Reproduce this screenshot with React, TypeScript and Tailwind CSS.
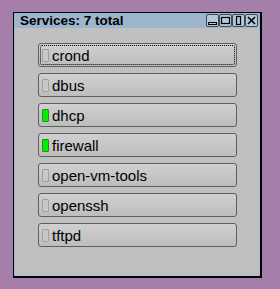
const services = [
  { name: "crond", on: false, focus: true },
  { name: "dbus", on: false },
  { name: "dhcp", on: true },
  { name: "firewall", on: true },
  { name: "open-vm-tools", on: false },
  { name: "openssh", on: false },
  { name: "tftpd", on: false },
];

const TitleButton = ({ kind }: { kind: "min" | "max" | "vmax" | "close" }) => (
  <div className="w-[13px] h-[13px] rounded-[2px] border border-[#3e4a57] bg-[#b4c6d8] flex items-center justify-center">
    <svg width="11" height="11" viewBox="0 0 11 11">
      {kind === "min" && <rect x="1.5" y="7.5" width="8" height="2" fill="none" stroke="#000" />}
      {kind === "max" && <rect x="1.5" y="2.5" width="8" height="6" fill="none" stroke="#000" strokeWidth="1.2" />}
      {kind === "vmax" && <rect x="3.5" y="1.5" width="4" height="8" fill="none" stroke="#000" strokeWidth="1.2" />}
      {kind === "close" && (
        <path d="M2 2 L9 9 M9 2 L2 9" stroke="#000" strokeWidth="1.6" />
      )}
    </svg>
  </div>
);

export default function App() {
  return (
    <div
      className="w-[280px] h-[289px] bg-[#a57ea9] pt-[12px] pl-[13px]"
      style={{ fontFamily: '"Liberation Sans", Arial, sans-serif' }}
    >
      <div className="w-[249px] h-[266px] border-t border-l border-r-2 border-b-2 border-black bg-[#c0c0c0] flex flex-col">
        <div className="h-[15px] bg-[#9db5cd] flex items-center pl-[6px] pr-[2px]">
          <span className="text-[13.5px] font-bold text-black leading-none">Services: 7 total</span>
          <div className="ml-auto flex gap-0">
            <TitleButton kind="min" />
            <TitleButton kind="max" />
            <TitleButton kind="vmax" />
            <TitleButton kind="close" />
          </div>
        </div>
        <div className="flex-1 border-l border-r border-b border-[#a9bdd2] flex flex-col gap-[6px] pt-[15px] pl-[23px]">
          {services.map((s) => (
            <div
              key={s.name}
              className="relative w-[199px] h-[24px] rounded-[3px] border border-[#5e5e5e] bg-gradient-to-b from-[#d0d0d0] to-[#bdbdbd] flex items-center pl-[3px] gap-[3px]"
            >
              {s.focus && (
                <div className="absolute inset-[1px] border border-dotted border-black rounded-[2px]" />
              )}
              <div
                className={
                  s.on
                    ? "w-[7px] h-[13px] bg-[#00f000] border border-[#2c8a2c] rounded-[1px]"
                    : "w-[7px] h-[13px] bg-[#c8c8c8] border border-[#a0a0a0] rounded-[1px]"
                }
              />
              <span className="text-[15px] text-black leading-none">{s.name}</span>
            </div>
          ))}
        </div>
      </div>
    </div>
  );
}
